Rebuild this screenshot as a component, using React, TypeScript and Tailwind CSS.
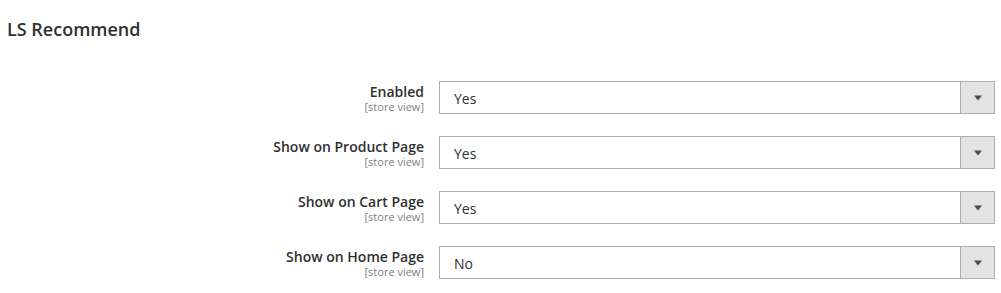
import React from "react";

const fields = [
  { label: "Enabled", value: "Yes" },
  { label: "Show on Product Page", value: "Yes" },
  { label: "Show on Cart Page", value: "Yes" },
  { label: "Show on Home Page", value: "No" },
];

const App = () => {
  return (
    <div className="w-[1001px] h-[293px] bg-white text-[#303030] font-['Open_Sans',sans-serif] pl-[7px] pr-[6px] pt-[17px]">
      <h2 className="text-[18px] font-semibold leading-[24px] text-[#303030]">LS Recommend</h2>

      <div className="flex flex-col gap-[22px] mt-[40px]">
        {fields.map((f) => (
          <div key={f.label} className="flex items-start gap-[15px]">
            {/* Label */}
            <div className="w-[417px] shrink-0 flex flex-col items-end text-right pt-[1px]">
              <span className="text-[14px] font-semibold leading-[19px] text-[#303030]">{f.label}</span>
              <span className="text-[11px] leading-[12px] text-[#808080]">[store view]</span>
            </div>

            {/* Select */}
            <div className="flex-1 h-[33px] flex border border-[#adadad] bg-white">
              <div className="flex-1 flex items-center pl-[14px] pt-[1px] text-[14px] text-[#303030]">{f.value}</div>
              <div className="w-[34px] flex items-center justify-center bg-[#e3e3e3] border-l border-[#adadad]">
                <svg width="10" height="6" viewBox="0 0 10 6">
                  <path d="M1 0.5 L9 0.5 L5 5.5 Z" fill="#514943" />
                </svg>
              </div>
            </div>
          </div>
        ))}
      </div>
    </div>
  );
};

export default App;
